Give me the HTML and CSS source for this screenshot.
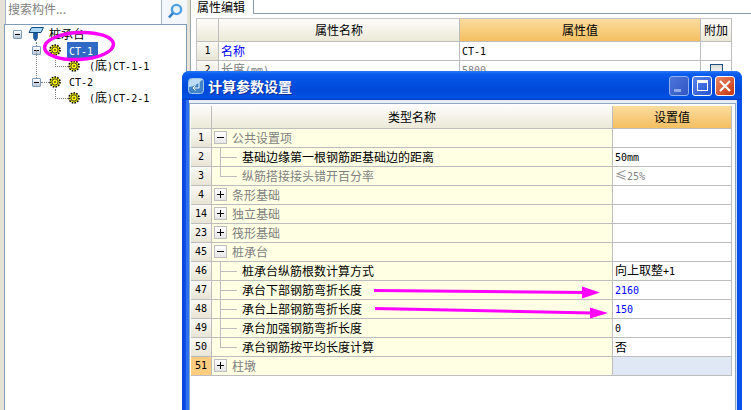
FILE: index.html
```html
<!DOCTYPE html>
<html lang="zh-CN">
<head>
  <meta charset="UTF-8" />
  <title>计算参数设置</title>
  <link rel="stylesheet" href="styles.css">
</head>
<body>
  <svg class="defs" width="0" height="0">
    <symbol id="gear" viewBox="0 0 12 12">
      <circle cx="6" cy="6" r="5" fill="#ffff00" stroke="#000" stroke-width="1.6" stroke-dasharray="1.6 1.2"/>
      <circle cx="6" cy="6" r="3.2" fill="#ffff00" stroke="#333" stroke-width="1"/>
      <circle cx="6" cy="6" r="1.2" fill="#8a7a00"/>
    </symbol>
  </svg>

  <div class="left">
    <div class="search">
      <div class="search-input">搜索构件...</div>
      <div class="search-btn">
        <svg width="16" height="16" viewBox="0 0 16 16">
          <circle cx="9.5" cy="6.5" r="4.6" fill="#eaf4fd" stroke="#4f9fe0" stroke-width="2.4"/>
          <path d="M6 10 L2 14.5" stroke="#2f7fcb" stroke-width="2.6"/>
        </svg>
      </div>
    </div>
    <div class="tree">
      <div class="node root">
        <span class="box"></span>
        <svg class="pile" width="16" height="16" viewBox="0 0 16 16">
          <path d="M3.5 1.5 H15.5 L13 6.5 H1 Z" fill="#a9d6f2" stroke="#0f4f86"/>
          <path d="M5.5 7 H9.5 V12 L7.5 15 L5.5 12 Z" fill="#1b5fa8" stroke="#0f3f76" stroke-width="0.6"/>
        </svg>
        <span class="label">桩承台</span>
      </div>
      <div class="node lv1">
        <span class="box"></span>
        <svg class="gear" width="12" height="12"><use href="#gear"/></svg>
        <span class="label selected"><span class="a">CT-1</span></span>
      </div>
      <div class="node lv2">
        <svg class="gear" width="12" height="12"><use href="#gear"/></svg>
        <span class="label"><span class="a">(</span>底<span class="a">)CT-1-1</span></span>
      </div>
      <div class="node lv1 branch">
        <span class="box"></span>
        <svg class="gear" width="12" height="12"><use href="#gear"/></svg>
        <span class="label"><span class="a">CT-2</span></span>
      </div>
      <div class="node lv2">
        <svg class="gear" width="12" height="12"><use href="#gear"/></svg>
        <span class="label"><span class="a">(</span>底<span class="a">)CT-2-1</span></span>
      </div>
    </div>
  </div>

  <div class="right">
    <div class="tabs"><div class="tab">属性编辑</div></div>
    <table class="grid props">
      <tr class="head">
        <th class="c-no"></th>
        <th class="c-name">属性名称</th>
        <th class="c-val on">属性值</th>
        <th class="c-add">附加</th>
      </tr>
      <tr>
        <td class="no">1</td>
        <td class="blue">名称</td>
        <td><span class="a">CT-1</span></td>
        <td></td>
      </tr>
      <tr class="gray">
        <td class="no">2</td>
        <td>长度<span class="a">(mm)</span></td>
        <td><span class="a">5800</span></td>
        <td class="check-cell"><span class="check"></span></td>
      </tr>
    </table>
  </div>

  <div class="dlg">
    <div class="dlg-title">
      <svg class="dlg-icon" width="16" height="16" viewBox="0 0 16 16">
        <rect x="0.5" y="0.5" width="15" height="15" rx="3" fill="#3f83c8" stroke="#9cc6ea"/>
        <path d="M1 9 C5 9 10 6 15 1 H4 Q1 1 1 4 Z" fill="#bcdcf5"/>
        <path d="M11 4 V10 H5 M7.5 7.5 L5 10 L7.5 12.5" fill="none" stroke="#fff" stroke-width="1"/>
      </svg>
      <span class="dlg-name">计算参数设置</span>
      <div class="dlg-btns">
        <span class="wbtn min"><i></i></span>
        <span class="wbtn max"><i></i></span>
        <span class="wbtn close">
          <svg width="14" height="14" viewBox="0 0 14 14"><path d="M2 2 L12 12 M12 2 L2 12" stroke="#fff" stroke-width="2.2"/></svg>
        </span>
      </div>
    </div>
    <div class="dlg-body">
      <div class="dlg-panel">
        <table class="grid params">
          <tr class="head">
            <th class="p-no"></th>
            <th class="p-name">类型名称</th>
            <th class="p-val on">设置值</th>
          </tr>
          <tr class="gray"><td class="no">1</td><td class="t"><span class="pm minus"></span>公共设置项</td><td></td></tr>
          <tr><td class="no">2</td><td class="t leaf">基础边缘第一根钢筋距基础边的距离</td><td><span class="a">50mm</span></td></tr>
          <tr class="gray"><td class="no">3</td><td class="t leaf last">纵筋搭接接头错开百分率</td><td>≤<span class="a">25%</span></td></tr>
          <tr class="gray"><td class="no">4</td><td class="t"><span class="pm plus"></span>条形基础</td><td></td></tr>
          <tr class="gray"><td class="no">14</td><td class="t"><span class="pm plus"></span>独立基础</td><td></td></tr>
          <tr class="gray"><td class="no">23</td><td class="t"><span class="pm plus"></span>筏形基础</td><td></td></tr>
          <tr class="gray"><td class="no">45</td><td class="t"><span class="pm minus"></span>桩承台</td><td></td></tr>
          <tr><td class="no">46</td><td class="t leaf">桩承台纵筋根数计算方式</td><td>向上取整<span class="a">+1</span></td></tr>
          <tr><td class="no">47</td><td class="t leaf">承台下部钢筋弯折长度</td><td class="blue"><span class="a">2160</span></td></tr>
          <tr><td class="no">48</td><td class="t leaf">承台上部钢筋弯折长度</td><td class="blue"><span class="a">150</span></td></tr>
          <tr><td class="no">49</td><td class="t leaf">承台加强钢筋弯折长度</td><td><span class="a">0</span></td></tr>
          <tr><td class="no">50</td><td class="t leaf last">承台钢筋按平均长度计算</td><td>否</td></tr>
          <tr class="gray current"><td class="no">51</td><td class="t"><span class="pm plus"></span>柱墩</td><td class="empty"></td></tr>
        </table>
      </div>
    </div>
  </div>

  <!-- 标注 -->
  <svg class="marks" width="751" height="410" viewBox="0 0 751 410">
    <ellipse cx="79" cy="46" rx="34.5" ry="13.5" transform="rotate(-3 79 46)" fill="none" stroke="#ff00ff" stroke-width="3.5"/>
    <path d="M374 290.5 L584 292.5" stroke="#ff00ff" stroke-width="3"/>
    <path d="M582 286.5 L600 292.5 L582 298.5 Z" fill="#ff00ff"/>
    <path d="M375 308.5 L592 313" stroke="#ff00ff" stroke-width="3"/>
    <path d="M590 307.5 L608 313 L590 318.5 Z" fill="#ff00ff"/>
  </svg>
</body>
</html>
```

FILE: styles.css
```css
* {
  box-sizing: border-box;
  margin: 0;
  padding: 0;
}

body {
  position: relative;
  display: flex;
  width: 751px;
  height: 410px;
  overflow: hidden;
  background: #fff;
  color: #000;
  font-family: "Noto Sans CJK SC", sans-serif;
  font-size: 12px;
  line-height: 16px;
}

.defs {
  position: absolute;
}

/* half width latin, like the old bitmap font */
.a {
  font-family: "DejaVu Sans Mono", monospace;
  font-size: 10px;
}

/* left side */
.left {
  display: flex;
  flex-direction: column;
  width: 190px;
  padding-right: 3px;
  background: #e6e3d6;
}

.search {
  display: flex;
  height: 24px;
  margin-left: 5px;
  background: #fff;
  border-left: 1px solid #a9b8c8;
}

.search-input {
  flex: 1;
  padding: 1px 0 0 2px;
  color: #808080;
  font-size: 12px;
}

.search-btn {
  display: flex;
  justify-content: center;
  align-items: center;
  width: 26px;
  height: 24px;
  padding: 0 0 3px 0;
  background: #f3f6fb;
  border-left: 1px solid #a9b8c8;
}

.tree {
  flex: 1;
  margin-left: 4px;
  padding-top: 1px;
  background: #fff;
  border: 1px solid #7f9db9;
  border-bottom: 0;
}

.node {
  position: relative;
  display: flex;
  align-items: center;
  height: 16px;
}

.box {
  position: relative;
  width: 9px;
  height: 9px;
  background: linear-gradient(#fff, #b9c6d8);
  border: 1px solid #7f9db9;
  border-radius: 1px;
}

.box::after {
  content: "";
  position: absolute;
  left: 1px;
  top: 3px;
  width: 5px;
  height: 1px;
  background: #000;
}

.root {
  padding-left: 8px;
}

.pile {
  margin-left: 6px;
}

.root .label {
  margin-left: 3px;
  padding: 0 2px;
}

.lv1 {
  padding-left: 27px;
}

.lv1 .gear {
  margin-left: 8px;
}

.lv1 .label {
  margin-left: 6px;
  padding: 0 2px;
}

.selected {
  width: 31px;
  height: 16px;
  background: #316ac5;
  color: #fff;
}

.lv2 {
  padding-left: 63px;
}

.lv2 .label {
  margin-left: 9px;
}

/* dotted tree connectors */
.lv2::before {
  content: "";
  position: absolute;
  left: 50px;
  top: -1px;
  width: 12px;
  height: 9px;
  border-left: 1px dotted #808080;
  border-bottom: 1px dotted #808080;
}

.branch::before {
  content: "";
  position: absolute;
  left: 31px;
  top: -24px;
  height: 28px;
  border-left: 1px dotted #808080;
}

.branch::after {
  content: "";
  position: absolute;
  left: 36px;
  top: 8px;
  width: 8px;
  border-top: 1px dotted #808080;
}

.lv1:not(.branch) .box::before {
  content: "";
  position: absolute;
  left: 3px;
  top: -5px;
  height: 4px;
  border-left: 1px dotted #808080;
}

/* right side */
.right {
  flex: 1;
  background: #fff;
  border-left: 1px solid #9aa5ad;
}

.tabs {
  height: 14px;
  border-bottom: 1px solid #8c9ba8;
}

.tab {
  width: 63px;
  height: 14px;
  padding-left: 6px;
  background: #fff;
  border-right: 1px solid #8c9ba8;
  line-height: 13px;
}

.grid {
  border-collapse: separate;
  border-spacing: 0;
  table-layout: fixed;
}

.grid th,
.grid td {
  height: 19px;
  padding: 0 2px;
  font-weight: normal;
  line-height: 14px;
  text-align: left;
  white-space: nowrap;
  border-right: 1px solid #bdbdbd;
  border-bottom: 1px solid #bdbdbd;
}

.grid .head th {
  height: 23px;
  text-align: center;
  background: linear-gradient(#fdfcfa, #ece9d8);
}

.grid .head th.on {
  background: linear-gradient(#fbdc9f, #f4bf60);
}

.grid td.no {
  padding: 0;
  text-align: center;
  color: #000;
  font-family: "DejaVu Sans Mono", monospace;
  font-size: 10px;
  background: linear-gradient(#faf9f4, #e8e5d6);
}

.grid td.blue {
  color: #0000ff;
}

.gray td {
  color: #808080;
}

/* property table */
.props {
  width: 534px;
  margin: 4px 0 0 5px;
  border-top: 1px solid #c4c4c4;
  border-left: 1px solid #c4c4c4;
}

.c-no { width: 22px; }
.c-name { width: 241px; }
.c-val { width: 241px; }
.c-add { width: 31px; }

.check-cell {
  text-align: center;
}

.check {
  display: block;
  width: 13px;
  height: 13px;
  margin: 0 auto;
  background: linear-gradient(#dcdcd6, #fff);
  border: 1px solid #1c5180;
}

/* dialog */
.dlg {
  position: absolute;
  left: 182px;
  top: 71px;
  width: 560px;
  height: 339px;
  padding: 0 5px 0 4px;
  background: linear-gradient(to right, #0f3fd8, #0b52ea 4px);
  border-radius: 7px 7px 0 0;
}

.dlg-title {
  display: flex;
  align-items: center;
  height: 29px;
  margin: 0 -5px 0 -4px;
  padding: 0 7px 0 6px;
  background: linear-gradient(#2a7bf5 0, #0a5cf0 3px, #0554e4 8px, #0048d8 20px, #0252e6 27px, #0038b8);
  border-radius: 7px 7px 0 0;
}

.dlg-icon {
  flex: none;
}

.dlg-name {
  margin-left: 4px;
  color: #fff;
  font-size: 14px;
  font-weight: bold;
  text-shadow: 1px 1px 0 #0f2f90;
}

.dlg-btns {
  display: flex;
  gap: 3px;
  margin-left: auto;
}

.wbtn {
  display: flex;
  justify-content: center;
  align-items: center;
  width: 20px;
  height: 20px;
  border: 1px solid #fff;
  border-radius: 3px;
  background: linear-gradient(135deg, #5b83ea, #2553d0);
}

.wbtn.min {
  border-color: #8fb0ee;
  background: linear-gradient(135deg, #4f74da, #2f56c4);
}

.min i {
  width: 7px;
  height: 3px;
  margin: 9px 3px 0 0;
  background: #8fa8ea;
}

.max i {
  width: 11px;
  height: 11px;
  border: 1px solid #fff;
  border-top-width: 3px;
}

.wbtn.close {
  background: linear-gradient(135deg, #ea8a68, #c8300c);
}

.dlg-body {
  height: 310px;
  padding-top: 3px;
  background: #e8eef6;
  border-left: 3px solid #2f72f0;
  border-right: 1px solid #cfe0f6;
}

.dlg-panel {
  height: 100%;
  padding: 1px 0 0 1px;
  background: #fff;
  border: 1px solid #8fa8c0;
  border-bottom: 0;
}

.params {
  width: 541px;
  border-top: 1px solid #fff;
}

.p-no { width: 21px; }
.p-name { width: 401px; }
.p-val { width: 119px; }

.grid td.t {
  padding-left: 2px;
  background: #ffffe3;
}

.pm {
  position: relative;
  display: inline-block;
  width: 13px;
  height: 13px;
  margin-right: 5px;
  vertical-align: top;
  background: linear-gradient(#fff, #e6e6e6);
  border: 1px solid #bdbdbd;
}

.pm::before {
  content: "";
  position: absolute;
  left: 2px;
  top: 5px;
  width: 7px;
  height: 1px;
  background: #000;
}

.plus::after {
  content: "";
  position: absolute;
  left: 5px;
  top: 2px;
  width: 1px;
  height: 7px;
  background: #000;
}

.grid td.leaf {
  padding-left: 30px;
  background:
    linear-gradient(#bdbdbd, #bdbdbd) 8px 0 / 1px 100% no-repeat,
    linear-gradient(#bdbdbd, #bdbdbd) 9px 9px / 16px 1px no-repeat,
    #ffffe3;
}

.grid td.leaf.last {
  background:
    linear-gradient(#bdbdbd, #bdbdbd) 8px 0 / 1px 10px no-repeat,
    linear-gradient(#bdbdbd, #bdbdbd) 9px 9px / 16px 1px no-repeat,
    #ffffe3;
}

.params .current td.no {
  background: #ffcc80;
}

.params td.empty {
  background: #dfe8f4;
}

.marks {
  position: absolute;
  left: 0;
  top: 0;
  pointer-events: none;
}
```
